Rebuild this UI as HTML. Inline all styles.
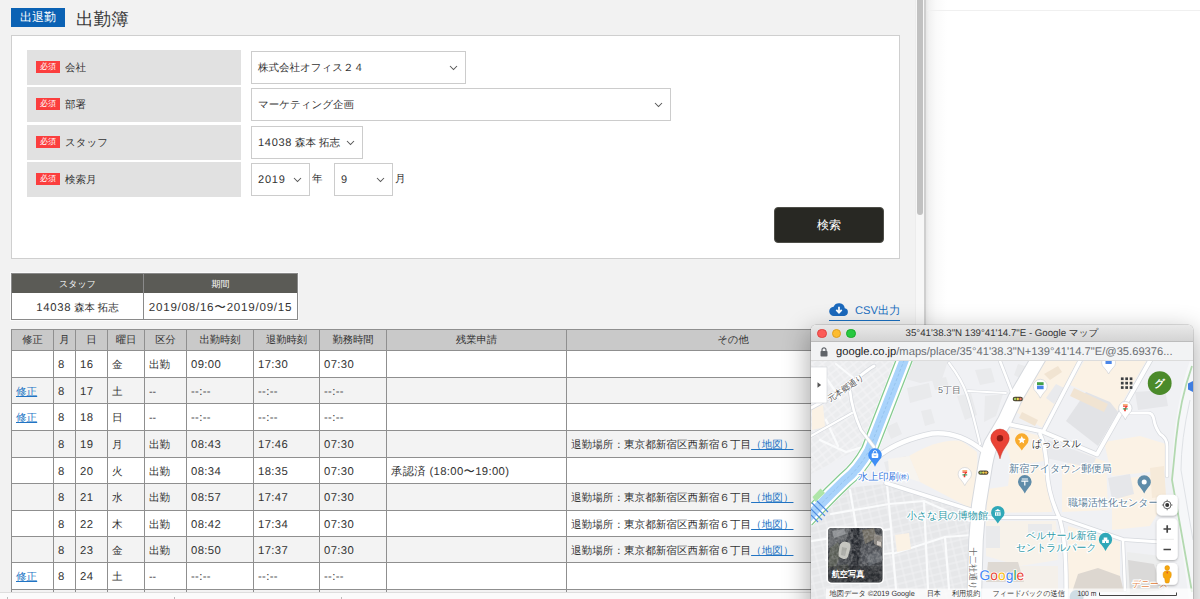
<!DOCTYPE html>
<html lang="ja">
<head>
<meta charset="utf-8">
<title>出勤簿</title>
<style>
*{box-sizing:border-box;margin:0;padding:0}
html,body{width:1200px;height:599px;overflow:hidden;background:#fff}
body{position:relative;font-family:"Liberation Sans",sans-serif;font-size:10.6px;color:#333;line-height:1;text-rendering:geometricPrecision}
.abs{position:absolute;white-space:nowrap;overflow:hidden}
/* main browser window */
#main{position:absolute;left:0;top:0;width:925px;height:599px;background:#f2f2f2;overflow:hidden}
#rightbg{position:absolute;left:925px;top:0;width:275px;height:599px;background:#fff}
#rightbg .sh{position:absolute;left:0;top:0;width:22px;height:599px;background:linear-gradient(to right,#e3e3e3 0,#f1f1f1 18%,#fafafa 50%,#fff 100%)}
#rightbg .ln{position:absolute;left:2px;top:10px;width:273px;height:1px;background:#f0f0f0}
#sbtrack{position:absolute;left:915px;top:0;width:10px;height:599px;background:#f7f7f7;border-left:1px solid #ececec}
#sbthumb{position:absolute;left:917px;top:0;width:6px;height:215px;background:#c1c1c1;border-radius:0 0 3px 3px}
#edge{position:absolute;left:924px;top:0;width:2px;height:599px;background:#cfcfcf}
.badge{left:11px;top:8px;width:54px;height:19px;background:#0b62b4;color:#fff;font-size:12px;line-height:19px;text-align:center}
.title{left:76px;top:6px;height:26px;width:200px;font-size:17.6px;line-height:26px;color:#3a3a3a}
#panel{position:absolute;left:11px;top:35px;width:889px;height:224px;background:#fff;border:1px solid #cfcfcf}
.lab{left:26.500px;width:214px;height:35px;background:#e1e1e1}
.req{position:absolute;left:9.500px;top:11px;width:24px;height:12px;background:#fb3e3e;color:#fff;font-size:8px;line-height:12px;text-align:center}
.lab span.t{position:absolute;left:38.500px;top:0;line-height:36.500px;font-size:10.5px;color:#333}
.sel{background:#fff;border:1px solid #ccc;height:32.500px;line-height:32.500px;padding-left:6px;color:#333;font-size:10.5px}
.n{letter-spacing:.7px}
.sel svg{position:absolute;right:7px;top:13px}
.btn{left:774px;top:207px;width:110px;height:36px;background:#282823;border:1px solid #4e4e48;border-radius:4px;color:#fff;font-size:12px;line-height:34px;text-align:center}
/* summary table */
.sum{position:absolute;left:11px;top:273px;width:287px;height:47px;border:1px solid #8a8a8a;background:#fff;box-shadow:0 0 0 1px #fafafa}
.sum .h{position:absolute;top:0;height:19px;background:#5b5b56;color:#fff;font-size:9px;line-height:21.500px;text-align:center}
.sum .d{position:absolute;top:19px;height:26px;line-height:30.500px;text-align:center;font-size:10.4px;color:#333;white-space:nowrap;overflow:hidden}
/* main table */
#tbl{position:absolute;left:11px;top:329px;width:905px;height:280px;border-left:1px solid #8f8f8f;border-top:1px solid #8f8f8f;background:#fff}
.tr{position:absolute;left:0;width:904px;border-bottom:1px solid #8f8f8f;overflow:hidden}
.tr.hd{top:0;height:21px;background:#c9c9c9}

.tr.alt{background:#f3f3f3}
.td{position:absolute;top:0;height:100%;border-right:1px solid #8f8f8f;line-height:28px;padding-left:4px;white-space:nowrap;overflow:hidden;font-size:10.6px;color:#333}
.hd .td{line-height:22px;text-align:center;padding-left:0;font-size:10.3px}
.td.num{font-size:11.3px;letter-spacing:.35px}
a{color:#2174c4;text-decoration:underline}
.csv{left:829px;top:301px;width:71px;height:19.5px;border-bottom:1px solid #1a6fc0;color:#1a6fc0;font-size:11.2px;line-height:20px;overflow:visible}
.csv svg{position:absolute;left:0;top:.5px}
.csv span{position:absolute;left:26px;top:0}
/*POPCSS*/
#pop{position:absolute;left:811px;top:325px;width:382px;height:290px;background:#fff;border-radius:5px 5px 0 0;box-shadow:0 9px 26px 3px rgba(0,0,0,.3),0 0 0 .5px rgba(0,0,0,.22);overflow:visible}
#pop .tb{position:absolute;left:0;top:0;width:382px;height:17px;background:linear-gradient(#e9e9e9,#d4d4d4);border-radius:5px 5px 0 0;border-bottom:1px solid #bcbcbc}
#pop .tb i{position:absolute;top:3.500px;width:9.5px;height:9.5px;border-radius:50%;border:.5px solid}
#pop .tt{position:absolute;left:60px;top:0;width:262px;height:17px;line-height:18px;text-align:center;font-size:9.7px;color:#333;white-space:nowrap;overflow:hidden}
#pop .ub{position:absolute;left:0;top:17px;width:382px;height:19px;background:#f2f3f4;border-bottom:1px solid #dcdcdc}
#pop .lock{position:absolute;left:9.200px;top:4.500px}
#pop .url{position:absolute;left:25px;top:0;height:19px;line-height:21px;font-size:11.18px;color:#6a6e73;white-space:nowrap;overflow:hidden;width:350px}
#pop .url b{font-weight:normal;color:#222}
#map{position:absolute;left:0;top:36px;width:382px;height:238px;overflow:hidden;background:#eff1f4}
#map svg{position:absolute;left:0;top:0}
.ml{font-family:"Liberation Sans",sans-serif}
/*ENDPOPCSS*/
</style>
</head>
<body>
<div id="main">
  <div class="abs badge">出退勤</div>
  <div class="abs title">出勤簿</div>
  <div id="panel"></div>

  <div class="abs lab" style="top:50px"><span class="req">必須</span><span class="t">会社</span></div>
  <div class="abs lab" style="top:87px"><span class="req">必須</span><span class="t">部署</span></div>
  <div class="abs lab" style="top:125px"><span class="req">必須</span><span class="t">スタッフ</span></div>
  <div class="abs lab" style="top:162px"><span class="req">必須</span><span class="t">検索月</span></div>

  <div class="abs sel" style="left:251px;top:51px;width:214.5px">株式会社オフィス２４<svg width="9" height="6" viewBox="0 0 9 6"><path d="M1 1l3.5 3.5L8 1" fill="none" stroke="#555" stroke-width="1.05"/></svg></div>
  <div class="abs sel" style="left:251px;top:88px;width:420px">マーケティング企画<svg width="9" height="6" viewBox="0 0 9 6"><path d="M1 1l3.5 3.5L8 1" fill="none" stroke="#555" stroke-width="1.05"/></svg></div>
  <div class="abs sel" style="left:251px;top:126px;width:111.5px;font-size:10.5px"><span class="n" style="font-size:11px">14038</span> 森本 拓志<svg width="9" height="6" viewBox="0 0 9 6"><path d="M1 1l3.5 3.5L8 1" fill="none" stroke="#555" stroke-width="1.05"/></svg></div>
  <div class="abs sel" style="left:251px;top:163px;width:58.5px;font-size:11px;letter-spacing:.8px">2019<svg width="9" height="6" viewBox="0 0 9 6"><path d="M1 1l3.5 3.5L8 1" fill="none" stroke="#555" stroke-width="1.05"/></svg></div>
  <div class="abs" style="left:312px;top:163px;height:32px;line-height:33.500px;width:14px">年</div>
  <div class="abs sel" style="left:334px;top:163px;width:58.5px;font-size:11px">9<svg width="9" height="6" viewBox="0 0 9 6"><path d="M1 1l3.5 3.5L8 1" fill="none" stroke="#555" stroke-width="1.05"/></svg></div>
  <div class="abs" style="left:395px;top:163px;height:32px;line-height:33.500px;width:14px">月</div>

  <div class="abs btn">検索</div>

  <div class="sum">
    <div class="h" style="left:0;width:132px;border-right:1px solid #8a8a8a">スタッフ</div>
    <div class="h" style="left:132px;width:153px">期間</div>
    <div class="d" style="left:0;width:132px;border-right:1px solid #8a8a8a"><span class="n" style="font-size:11.3px">14038</span> 森本 拓志</div>
    <div class="d" style="left:132px;width:153px;font-size:11.6px;letter-spacing:.75px">2019/08/16〜2019/09/15</div>
  </div>

  <div class="abs csv"><svg width="20" height="16" viewBox="0 0 20 16"><path d="M15.8 6.2A5.9 5.9 0 0 0 4.600 4.700A4.600 4.600 0 0 0 5 13.900h10.300a3.900 3.900 0 0 0 .5-7.700z" fill="#1b69bd"/><path d="M10 4.800v5.400M7.300 7.800L10 10.700L12.700 7.800" fill="none" stroke="#fff" stroke-width="1.700"/></svg><span>CSV出力</span></div>

  <div id="tbl">
    <div class="tr hd"><div class="td" style="left:0.0px;width:42.0px">修正</div><div class="td" style="left:42.0px;width:22.0px">月</div><div class="td" style="left:64.0px;width:32.0px">日</div><div class="td" style="left:96.0px;width:37.0px">曜日</div><div class="td" style="left:133.0px;width:42.0px">区分</div><div class="td" style="left:175.0px;width:67.0px">出勤時刻</div><div class="td" style="left:242.0px;width:66.0px">退勤時刻</div><div class="td" style="left:308.0px;width:67.0px">勤務時間</div><div class="td" style="left:375.0px;width:180.0px">残業申請</div><div class="td" style="left:555.0px;width:333.0px">その他</div></div>
    <div class="tr r" style="top:21px;height:27px"><div class="td" style="left:0.0px;width:42.0px"></div><div class="td num" style="left:42.0px;width:22.0px">8</div><div class="td num" style="left:64.0px;width:32.0px">16</div><div class="td" style="left:96.0px;width:37.0px">金</div><div class="td" style="left:133.0px;width:42.0px">出勤</div><div class="td num" style="left:175.0px;width:67.0px">09:00</div><div class="td num" style="left:242.0px;width:66.0px">17:30</div><div class="td num" style="left:308.0px;width:67.0px">07:30</div><div class="td" style="left:375.0px;width:180.0px"></div><div class="td" style="left:555.0px;width:333.0px"></div></div>
    <div class="tr r alt" style="top:48px;height:26px"><div class="td" style="left:0.0px;width:42.0px"><a>修正</a></div><div class="td num" style="left:42.0px;width:22.0px">8</div><div class="td num" style="left:64.0px;width:32.0px">17</div><div class="td" style="left:96.0px;width:37.0px">土</div><div class="td" style="left:133.0px;width:42.0px">--</div><div class="td num" style="left:175.0px;width:67.0px">--:--</div><div class="td num" style="left:242.0px;width:66.0px">--:--</div><div class="td num" style="left:308.0px;width:67.0px">--:--</div><div class="td" style="left:375.0px;width:180.0px"></div><div class="td" style="left:555.0px;width:333.0px"></div></div>
    <div class="tr r" style="top:74px;height:27px"><div class="td" style="left:0.0px;width:42.0px"><a>修正</a></div><div class="td num" style="left:42.0px;width:22.0px">8</div><div class="td num" style="left:64.0px;width:32.0px">18</div><div class="td" style="left:96.0px;width:37.0px">日</div><div class="td" style="left:133.0px;width:42.0px">--</div><div class="td num" style="left:175.0px;width:67.0px">--:--</div><div class="td num" style="left:242.0px;width:66.0px">--:--</div><div class="td num" style="left:308.0px;width:67.0px">--:--</div><div class="td" style="left:375.0px;width:180.0px"></div><div class="td" style="left:555.0px;width:333.0px"></div></div>
    <div class="tr r alt" style="top:101px;height:27px"><div class="td" style="left:0.0px;width:42.0px"></div><div class="td num" style="left:42.0px;width:22.0px">8</div><div class="td num" style="left:64.0px;width:32.0px">19</div><div class="td" style="left:96.0px;width:37.0px">月</div><div class="td" style="left:133.0px;width:42.0px">出勤</div><div class="td num" style="left:175.0px;width:67.0px">08:43</div><div class="td num" style="left:242.0px;width:66.0px">17:46</div><div class="td num" style="left:308.0px;width:67.0px">07:30</div><div class="td" style="left:375.0px;width:180.0px"></div><div class="td" style="left:555.0px;width:333.0px">退勤場所：東京都新宿区西新宿６丁目<a>（地図）</a></div></div>
    <div class="tr r" style="top:128px;height:26px"><div class="td" style="left:0.0px;width:42.0px"></div><div class="td num" style="left:42.0px;width:22.0px">8</div><div class="td num" style="left:64.0px;width:32.0px">20</div><div class="td" style="left:96.0px;width:37.0px">火</div><div class="td" style="left:133.0px;width:42.0px">出勤</div><div class="td num" style="left:175.0px;width:67.0px">08:34</div><div class="td num" style="left:242.0px;width:66.0px">18:35</div><div class="td num" style="left:308.0px;width:67.0px">07:30</div><div class="td num" style="left:375.0px;width:180.0px">承認済 (18:00〜19:00)</div><div class="td" style="left:555.0px;width:333.0px"></div></div>
    <div class="tr r alt" style="top:154px;height:27px"><div class="td" style="left:0.0px;width:42.0px"></div><div class="td num" style="left:42.0px;width:22.0px">8</div><div class="td num" style="left:64.0px;width:32.0px">21</div><div class="td" style="left:96.0px;width:37.0px">水</div><div class="td" style="left:133.0px;width:42.0px">出勤</div><div class="td num" style="left:175.0px;width:67.0px">08:57</div><div class="td num" style="left:242.0px;width:66.0px">17:47</div><div class="td num" style="left:308.0px;width:67.0px">07:30</div><div class="td" style="left:375.0px;width:180.0px"></div><div class="td" style="left:555.0px;width:333.0px">退勤場所：東京都新宿区西新宿６丁目<a>（地図）</a></div></div>
    <div class="tr r" style="top:181px;height:26px"><div class="td" style="left:0.0px;width:42.0px"></div><div class="td num" style="left:42.0px;width:22.0px">8</div><div class="td num" style="left:64.0px;width:32.0px">22</div><div class="td" style="left:96.0px;width:37.0px">木</div><div class="td" style="left:133.0px;width:42.0px">出勤</div><div class="td num" style="left:175.0px;width:67.0px">08:42</div><div class="td num" style="left:242.0px;width:66.0px">17:34</div><div class="td num" style="left:308.0px;width:67.0px">07:30</div><div class="td" style="left:375.0px;width:180.0px"></div><div class="td" style="left:555.0px;width:333.0px">退勤場所：東京都新宿区西新宿６丁目<a>（地図）</a></div></div>
    <div class="tr r alt" style="top:207px;height:26px"><div class="td" style="left:0.0px;width:42.0px"></div><div class="td num" style="left:42.0px;width:22.0px">8</div><div class="td num" style="left:64.0px;width:32.0px">23</div><div class="td" style="left:96.0px;width:37.0px">金</div><div class="td" style="left:133.0px;width:42.0px">出勤</div><div class="td num" style="left:175.0px;width:67.0px">08:50</div><div class="td num" style="left:242.0px;width:66.0px">17:37</div><div class="td num" style="left:308.0px;width:67.0px">07:30</div><div class="td" style="left:375.0px;width:180.0px"></div><div class="td" style="left:555.0px;width:333.0px">退勤場所：東京都新宿区西新宿６丁目<a>（地図）</a></div></div>
    <div class="tr r" style="top:233px;height:27px"><div class="td" style="left:0.0px;width:42.0px"><a>修正</a></div><div class="td num" style="left:42.0px;width:22.0px">8</div><div class="td num" style="left:64.0px;width:32.0px">24</div><div class="td" style="left:96.0px;width:37.0px">土</div><div class="td" style="left:133.0px;width:42.0px">--</div><div class="td num" style="left:175.0px;width:67.0px">--:--</div><div class="td num" style="left:242.0px;width:66.0px">--:--</div><div class="td num" style="left:308.0px;width:67.0px">--:--</div><div class="td" style="left:375.0px;width:180.0px"></div><div class="td" style="left:555.0px;width:333.0px"></div></div>
    <div class="tr r alt" style="top:260px;height:27px"><div class="td" style="left:0.0px;width:42.0px"></div><div class="td num" style="left:42.0px;width:22.0px"></div><div class="td num" style="left:64.0px;width:32.0px"></div><div class="td" style="left:96.0px;width:37.0px"></div><div class="td" style="left:133.0px;width:42.0px"></div><div class="td num" style="left:175.0px;width:67.0px"></div><div class="td num" style="left:242.0px;width:66.0px"></div><div class="td num" style="left:308.0px;width:67.0px"></div><div class="td" style="left:375.0px;width:180.0px"></div><div class="td" style="left:555.0px;width:333.0px"></div></div>
  </div>
  <div id="sbtrack"></div>
  <div id="sbthumb"></div>
  <div class="abs" style="left:0;top:591.500px;width:925px;height:8px;background:#fbfbfb;border-top:1px solid #dedede"></div>
  <div class="abs" style="left:7px;top:597px;width:1px;height:2px;background:#bbb"></div><div class="abs" style="left:174px;top:597px;width:1px;height:2px;background:#bbb"></div><div class="abs" style="left:341px;top:597px;width:1px;height:2px;background:#bbb"></div>
</div>
<div id="rightbg"><div class="sh"></div><div class="ln"></div></div>
<div id="edge"></div>
<!--POP-->
<div id="pop">
  <div class="tb">
    <i style="left:6px;background:#fc5b57;border-color:#df4240"></i><i style="left:20.600px;background:#fdbc2e;border-color:#de9f22"></i><i style="left:35.200px;background:#27c840;border-color:#1aab29"></i>
    <div class="tt">35°41'38.3"N 139°41'14.7"E - Google マップ</div>
  </div>
  <div class="ub">
    <svg class="lock" width="8" height="10" viewBox="0 0 8 10"><rect x="0.5" y="4" width="7" height="5.5" rx="0.8" fill="#5f6368"/><path d="M2 4.2V2.8a2 2 0 0 1 4 0v1.4" fill="none" stroke="#5f6368" stroke-width="1.2"/></svg>
    <div class="url"><b>google.co.jp</b>/maps/place/35°41'38.3"N+139°41'14.7"E/@35.69376...</div>
  </div>
  <div id="map">
<svg width="382" height="238" viewBox="811 361 382 238">
<defs>
<pattern id="dense" width="9" height="7" patternUnits="userSpaceOnUse" patternTransform="rotate(-14)"><rect width="9" height="7" fill="#f1f1f3"/><rect x="0.5" y="0.5" width="8" height="6" fill="#e6e7e9"/></pattern>
<pattern id="dense2" width="8" height="6.5" patternUnits="userSpaceOnUse" patternTransform="rotate(-38)"><rect width="8" height="6.5" fill="#f4f4f6"/><rect x="0.6" y="0.6" width="6.800" height="5.300" fill="#ebecee"/></pattern>
<filter id="cs" x="-30%" y="-30%" width="160%" height="160%"><feDropShadow dx="0" dy="1" stdDeviation="1.2" flood-color="#000" flood-opacity=".3"/></filter>
<filter id="nz" x="0" y="0" width="100%" height="100%"><feTurbulence type="fractalNoise" baseFrequency=".35" numOctaves="2" seed="7" result="t"/><feColorMatrix type="matrix" values="0 0 0 0 .5  0 0 0 0 .5  0 0 0 0 .5  .9 .9 .9 0 -1.05"/></filter>
</defs>
<rect x="811" y="361" width="382" height="238" fill="#f0f1f4"/>
<!-- dense building areas -->
<path d="M811 361H898L868 444L811 474Z" fill="url(#dense2)"/>
<path d="M811 520L846 488L884 484L972 512L972 599H811Z" fill="url(#dense)"/>
<!-- large gray footprints right of river -->
<g fill="#e9eaec">
<path d="M908 361h40l-6 18l-22 4l-14 -4z"/><path d="M907 388l22 -5l3 14l-22 6z"/><path d="M886 427l11 -5l5 12l-11 5z"/><path d="M921 411l10 -2l4 14l-10 3z"/>
<path d="M932 380l14 -3l3 10l-14 3z"/><path d="M957 396l14 -3l6 22l-12 5z"/><path d="M975 370l16 -2l4 14l-15 3z"/>
<path d="M985 396l18 -2l-7 22l-12 6z"/><path d="M1018 364l14 4l-7 13l-11 -6z"/>
<path d="M884 462l22 -6l4 14l-22 8z"/>
</g>
<!-- beige commercial areas -->
<g fill="#fbf2e5">
<path d="M812 409l11 -4l2 22l-13 3z"/>
<path d="M909 456Q940 438 962 441L977 452L978 480L970 508L920 482Z"/>
<path d="M1016.700 412.500L1041.700 361L1078 361L1042 427.500Z"/>
<path d="M1084 361H1146L1112 420L1094 412L1100 398L1070 385Z"/>
<path d="M1003 446L1011 428L1040 436L1044 461L1012 466L1008 452Z"/>
<path d="M1010 470L1046 466L1052 512L986 513L988 489L1008 486Z"/>
<path d="M1062 470L1080 452L1106 462L1108 510L1062 512Z"/>
<path d="M1104 442L1140 436L1166 444L1168 470L1112 476Z"/>
<path d="M1112 480L1160 474L1166 500L1150 526L1112 530Z"/>
<path d="M1068 526L1120 542L1120 588L1068 592Z"/>
<path d="M986 521H1056L1058 560L1020 566L986 556Z" fill="#f7f2ea"/>
<path d="M1020 566h38v33h-38z" fill="#f4f0ea"/>
</g>
<path d="M888 459L909 456L920 482L889 472Z" fill="#f7f4ef"/>
<!-- gray buildings on right -->
<g fill="#e2e3e6">
<path d="M1066 421L1086 392L1110 402L1118 412L1098 446Z"/>
<path d="M1135 392l30 -2l3 16l-30 4z" fill="#e6e7ea"/>
<path d="M1046 398l10 -14l8 4l-10 16z" fill="#e9eaed"/>
<path d="M1048 440l48 18l-4 10l-46 -10z" fill="#e8e9ec"/>
<path d="M1108 478l22 -4l4 20l-22 6z" fill="#e6e7ea"/>
<path d="M1127 552l34 4l4 43h-40z" fill="#eceded"/>
<path d="M1128 560l26 4l8 26l-32 4z" fill="#dad9d8"/>
<path d="M988 562l30 0l6 20l-38 0z" fill="#ded9d3"/>
<path d="M986 526l14 0l0 22l-14 0z" fill="#e9eaec"/>
<path d="M1028 524h24v12h-24z" fill="#e9eaec"/>
</g>
<g fill="#f1e4d2">
<path d="M1022 412l16 8l-3 6l-16 -8z"/><path d="M1044 374l14 -8l4 6l-12 8z"/>
<path d="M1074 388l34 16l-4 8l-34 -16z"/><path d="M1150 468l14 -2l2 30l-14 2z" fill="#f6ead9"/>
</g>
<g fill="none" stroke="#fafbfc" stroke-width="2.200" stroke-linecap="round">
<path d="M887 484.300L891 526.800L893 553.700L896 589"/><path d="M831 514L889 504L924 501"/><path d="M812 541L891 529"/><path d="M924 502L928 589"/><path d="M945 537L949 589"/><path d="M893 553.700L945 537L972 535"/><path d="M826 560L893 553"/><path d="M850 490L856 526"/><path d="M924 501L972 522"/>
<path d="M822 372L840 398"/><path d="M836 364L856 380"/><path d="M820 440L846 452L866 446"/><path d="M826 420L838 446"/>
</g>
<path d="M895 535l14 -2l2 16l-14 3z" fill="#fbf2e5"/>
<path d="M1072 592l6 -18l20 -6l22 8l4 16z" fill="#ddd7d0"/>
<path d="M1193 361v238h-4L1172 480Q1172 440 1178 408T1190 361z" fill="#f6f7f9"/>
<!-- river -->
<path d="M906.200 355L888.300 401L869 450.500Q858 470 845 480Q826 498 806 520" fill="none" stroke="#fff" stroke-width="17.600"/>
<path d="M906.200 355L888.300 401L869 450.500Q858 470 845 480Q826 498 806 520" fill="none" stroke="#86cb90" stroke-width="16.600"/>
<path d="M906.200 355L888.300 401L869 450.500Q858 470 845 480Q826 498 806 520" fill="none" stroke="#fff" stroke-width="14"/>
<path d="M906.200 355L888.300 401L869 450.500Q858 470 845 480Q826 498 806 520" fill="none" stroke="#a9d3fb" stroke-width="9.300"/>
<path d="M906.200 355L888.300 401L869 450.500Q858 470 845 480Q826 498 806 520" fill="none" stroke="#8dbbe8" stroke-width=".7" stroke-dasharray="3 2"/>
<path d="M812 503l13 13M811 509l11 11M816 500l12 12M811 515l7 7" stroke="#4f8de0" stroke-width="1.200"/>
<path d="M812.500 497l8 -8.500l4.500 4.500l-9.500 9z" fill="#aee5a8"/>
<!-- minor roads: casing -->
<g fill="none" stroke="#d6d9de" stroke-linecap="round" stroke-linejoin="round">
<path d="M811 408Q840 392 855 380T874 366" stroke-width="4.5"/>
<path d="M850 391Q852 410 861 430L874 447" stroke-width="4"/>
<path d="M811 436L852 413" stroke-width="3.5"/>
<path d="M880 455Q900 440 932 433.500Q958 431 982 450" stroke-width="6"/>
<path d="M949 363Q962 380 967 395T980 444" stroke-width="3.5"/>
<path d="M1000 361L1012 392" stroke-width="4"/>
<path d="M968 391L1006 393" stroke-width="3"/>
<path d="M886 483L974 511" stroke-width="5"/>
<path d="M1008 424L1042 431.500L1097 454.500L1151 359" stroke-width="5.500"/>
<path d="M1044 430L1081 359" stroke-width="5"/>
<path d="M1130 413H1148Q1153 413 1154 420T1160 434Q1167 438 1167 446V476" stroke-width="4.200"/>
<path d="M985 517.500H1059L1123 539.500L1160 542" stroke-width="4.600"/>
<path d="M1040 434Q1046 446 1047 470T1059 517Q1067 540 1066 599" stroke-width="5"/>
<path d="M1123 540L1125 590" stroke-width="4"/>
</g>
<path d="M1041 354L1015 398.500L1004.600 421L991 444Q986.500 455 984.200 471.700L978.800 505L976 540L974 604" fill="none" stroke="#d6d9de" stroke-width="15.5" stroke-linejoin="round"/>
<!-- roads fill -->
<g fill="none" stroke="#fff" stroke-linecap="round" stroke-linejoin="round">
<path d="M811 408Q840 392 855 380T874 366" stroke-width="3"/>
<path d="M850 391Q852 410 861 430L874 447" stroke-width="2.6"/>
<path d="M811 436L852 413" stroke-width="2.2"/>
<path d="M880 455Q900 440 932 433.500Q958 431 982 450" stroke-width="4.4"/>
<path d="M949 363Q962 380 967 395T980 444" stroke-width="2.2"/>
<path d="M1000 361L1012 392" stroke-width="2.6"/>
<path d="M968 391L1006 393" stroke-width="1.8"/>
<path d="M886 483L974 511" stroke-width="3.6"/>
<path d="M1008 424L1042 431.500L1097 454.500L1151 359" stroke-width="4"/>
<path d="M1044 430L1081 359" stroke-width="3.600"/>
<path d="M1130 413H1148Q1153 413 1154 420T1160 434Q1167 438 1167 446V476" stroke-width="2.800"/>
<path d="M985 517.500H1059L1123 539.500L1160 542" stroke-width="3.200"/>
<path d="M1040 434Q1046 446 1047 470T1059 517Q1067 540 1066 599" stroke-width="3.600"/>
<path d="M1123 540L1125 590" stroke-width="2.600"/>
</g>
<path d="M1041 354L1015 398.500L1004.600 421L991 444Q986.500 455 984.200 471.700L978.800 505L976 540L974 604" fill="none" stroke="#fff" stroke-width="13.5" stroke-linejoin="round"/>
<!-- green line right -->
<path d="M1192 366Q1180 400 1176 440T1172 480L1192 592" fill="none" stroke="#b3d9b0" stroke-width="1.800"/><path d="M1190 400Q1181 440 1181 470L1193 540" fill="none" stroke="#dfe2e6" stroke-width="1"/>

<g class="ml" font-family="Liberation Sans, sans-serif" font-size="10.3" stroke-linejoin="round">
<g paint-order="stroke" stroke="#fff" stroke-width="2.2">
<text x="0" y="0" transform="translate(830 402) rotate(-34)" font-size="8.400" fill="#555" stroke-width="1.800" textLength="41.500" lengthAdjust="spacingAndGlyphs">元本郷通り</text>
<text x="938" y="393" font-size="8.800" fill="#6a6e73" stroke-width="1.500" textLength="23" lengthAdjust="spacingAndGlyphs">5丁目</text>
<text x="858" y="480" fill="#3f7de0" font-size="10.200" textLength="51" lengthAdjust="spacingAndGlyphs">水上印刷㈱</text>
<text x="1032" y="446.500" fill="#333" font-size="10" textLength="49" lengthAdjust="spacingAndGlyphs">ぱっとスル</text>
<text x="1009" y="472" fill="#5e7f99" textLength="102.600" lengthAdjust="spacingAndGlyphs">新宿アイタウン郵便局</text>
<text x="1068" y="505.500" fill="#5e7f99" font-size="10.100" textLength="90.500" lengthAdjust="spacingAndGlyphs">職場活性化センター</text>
<text x="906.700" y="518.800" fill="#2b98a6" font-size="10.200" textLength="81.300" lengthAdjust="spacingAndGlyphs">小さな貝の博物館</text>
<text x="1026" y="539" fill="#2b98a6" font-size="10.100" textLength="70.500" lengthAdjust="spacingAndGlyphs">ベルサール新宿</text>
<text x="1016" y="551" fill="#2b98a6" font-size="10.100" textLength="80.500" lengthAdjust="spacingAndGlyphs">セントラルパーク</text>
<text x="1132" y="587" fill="#e58a4e" font-size="9.500" textLength="36" lengthAdjust="spacingAndGlyphs">デニーズ</text>
<text x="0" y="0" transform="translate(969.800 547.500) rotate(90)" font-size="8.600" fill="#6a6a6a" stroke-width="1.200" textLength="42" lengthAdjust="spacingAndGlyphs">十二社通り</text>
</g>
<!-- poi pins -->
<g id="pins">
<path d="M870.81 460.36A6.80 6.80 0 1 1 879.19 460.36Q876.20 464.03 875.00 466.70Q873.80 464.03 870.81 460.36z" fill="#3f8ef5"/>
<rect x="871.700" y="453.200" width="6.600" height="4.800" rx=".9" fill="#fff"/><path d="M873.300 453.400v-1.100a1.700 1.700 0 0 1 3.400 0v1.100" fill="none" stroke="#fff" stroke-width=".9"/><path d="M873.600 455.300q1.400 1.300 2.800 0" fill="none" stroke="#3f8ef5" stroke-width=".7"/>
<path d="M1017.68 445.28A6.70 6.70 0 1 1 1025.92 445.28Q1023.00 448.44 1021.80 450.60Q1020.60 448.44 1017.68 445.28z" fill="#f9ab2d"/>
<path d="M1021.800 436.100l1.150 2.500l2.700.3l-2 1.850l.55 2.700l-2.400-1.400l-2.400 1.400l.55-2.700l-2-1.850l2.700-.3z" fill="#fff"/>
<path d="M1020.61 487.16A6.80 6.80 0 1 1 1028.99 487.16Q1026.00 490.88 1024.80 493.60Q1023.60 490.88 1020.61 487.16z" fill="#5f8ca9"/>
<path d="M1021.700 479h6.200M1021.300 481.100h7M1024.800 481.100v4.300" stroke="#fff" stroke-width="1.200" fill="none"/>
<path d="M1140.08 487.28A6.70 6.70 0 1 1 1148.32 487.28Q1145.40 490.94 1144.20 493.60Q1143.00 490.94 1140.08 487.28z" fill="#5f8ca9"/>
<circle cx="1144.200" cy="482" r="2.500" fill="#fff"/>
<path d="M993.68 517.88A6.70 6.70 0 1 1 1001.92 517.88Q999.00 521.24 997.80 523.60Q996.60 521.24 993.68 517.88z" fill="#2fa8b8"/>
<path d="M994.400 511.300l3.400-2.300l3.400 2.300zM995 512.200h5.600v3.600h-5.600z" fill="#fff"/><path d="M996.700 512.600v2.800M998.900 512.600v2.800" stroke="#2fa8b8" stroke-width=".8"/>
<path d="M1101.38 544.78A6.70 6.70 0 1 1 1109.62 544.78Q1106.70 548.39 1105.50 551.00Q1104.30 548.39 1101.38 544.78z" fill="#2fa8b8"/>
<path d="M1102.200 543h6.600v-3.200h-1.500v-2.400h-3.600v2.400h-1.500z" fill="#fff"/><path d="M1105.500 543v-1.800" stroke="#2fa8b8" stroke-width="1"/>
<circle cx="1076.600" cy="597" r="7" fill="#5f8ca9"/>
<path d="M960.68 479.48A6.70 6.70 0 1 1 968.92 479.48Q966.00 483.04 964.80 485.60Q963.60 483.04 960.68 479.48z" fill="#fff" stroke="#c9ccd1" stroke-width=".6"/>
<path d="M1121.18 413.48A6.70 6.70 0 1 1 1129.42 413.48Q1126.50 417.14 1125.30 419.80Q1124.10 417.14 1121.18 413.48z" fill="#fff" stroke="#c9ccd1" stroke-width=".6"/>
<path d="M1035.99 391.82A7.00 7.00 0 1 1 1044.61 391.82Q1041.50 395.51 1040.30 398.20Q1039.10 395.51 1035.99 391.82z" fill="#fff" stroke="#c9ccd1" stroke-width=".6"/>
<path d="M1104.29 368.02A7.00 7.00 0 1 1 1112.91 368.02Q1109.80 371.51 1108.60 374.00Q1107.40 371.51 1104.29 368.02z" fill="#fff" stroke="#c9ccd1" stroke-width=".6"/>
<path d="M962.5 471.4h4.600v1.400l-1.800 1.400v3h-1.600v-2.400l1.500-2h-2.700z" fill="#ee3b2f"/><rect x="962.4" y="474.4" width="4.800" height="1" fill="#1f9a55"/><rect x="962.4" y="470.4" width="4.800" height=".8" fill="#f58220"/>
<path d="M1123.0 405.4h4.600v1.400l-1.800 1.400v3h-1.600v-2.400l1.500-2h-2.700z" fill="#ee3b2f"/><rect x="1122.9" y="408.4" width="4.800" height="1" fill="#1f9a55"/><rect x="1122.9" y="404.4" width="4.800" height=".8" fill="#f58220"/>
<rect x="1037" y="382.200" width="6.600" height="2.800" fill="#43a047"/><rect x="1037" y="385.600" width="6.600" height="3.600" fill="#4a86e8"/>
<rect x="1105.500" y="361" width="6.200" height="3" fill="#4a86e8"/>
<g><rect x="978.300" y="470.400" width="10.200" height="4.400" rx="2.200" fill="#4d4631"/><circle cx="980.700" cy="472.600" r="1.200" fill="#9ccc65"/><circle cx="983.400" cy="472.600" r="1.200" fill="#f0d84a"/><circle cx="986.100" cy="472.600" r="1.200" fill="#f0b44a"/></g>
<g><rect x="1012.700" y="396.800" width="10.200" height="4.400" rx="2.200" fill="#4d4631"/><circle cx="1015.100" cy="399" r="1.200" fill="#9ccc65"/><circle cx="1017.800" cy="399" r="1.200" fill="#f0d84a"/><circle cx="1020.500" cy="399" r="1.200" fill="#ee7b6a"/></g>
<path d="M1193 381l-5 2.500v6l5 2.500z" fill="#3f7de0"/>
</g>
<!-- red marker -->
<path d="M1000 429.100a9.200 9.200 0 0 1 9.200 9.200c0 6-6.700 9.500-9.200 20.500c-2.500-11-9.200-14.500-9.200-20.500a9.200 9.200 0 0 1 9.200-9.200z" fill="#ea4335" stroke="#c5352b" stroke-width=".5"/>
<circle cx="1000" cy="438.300" r="3.200" fill="#8e1b14"/>
<!-- Google logo -->
<g font-size="14" paint-order="stroke" stroke="#fff" stroke-width="1.600"><text x="979.600" y="580" textLength="44.700" lengthAdjust="spacingAndGlyphs"><tspan fill="#4285f4">G</tspan><tspan fill="#ea4335">o</tspan><tspan fill="#fbbc05">o</tspan><tspan fill="#4285f4">g</tspan><tspan fill="#34a853">l</tspan><tspan fill="#ea4335">e</tspan></text></g>
<!-- apps + avatar -->
<g fill="#3c4043"><rect x="1120.900" y="377.400" width="2.700" height="2.700"/><rect x="1125.300" y="377.400" width="2.700" height="2.700"/><rect x="1129.700" y="377.400" width="2.700" height="2.700"/><rect x="1120.900" y="381.800" width="2.700" height="2.700"/><rect x="1125.300" y="381.800" width="2.700" height="2.700"/><rect x="1129.700" y="381.800" width="2.700" height="2.700"/><rect x="1120.900" y="386.200" width="2.700" height="2.700"/><rect x="1125.300" y="386.200" width="2.700" height="2.700"/><rect x="1129.700" y="386.200" width="2.700" height="2.700"/></g>
<circle cx="1159.700" cy="383.200" r="11.900" fill="#4b8a2a"/>
<text x="1159.700" y="387" text-anchor="middle" font-size="10.500" fill="#fff" font-weight="bold">グ</text>
<!-- side toggle -->
<g><rect x="810" y="367" width="17" height="36" fill="#fff" stroke="#d0d3d8" stroke-width=".6"/><path d="M817.500 382.200l3.600 2.800l-3.600 2.800z" fill="#555"/></g>
<!-- satellite thumb -->
<g>
<rect x="826.400" y="526.400" width="57.600" height="57.600" rx="5" fill="#fff"/>
<clipPath id="sc"><rect x="828" y="528" width="54.500" height="54.500" rx="3.800"/></clipPath>
<g clip-path="url(#sc)">
<rect x="828" y="528" width="55" height="55" fill="#3f4247"/>
<path d="M828 528h22l-4 12l-18 8z" fill="#5d6064"/><path d="M832 531l12 -2l2 5l-12 4z" fill="#8d9094"/>
<path d="M830 548l8 -6l4 10l-6 14l-8 2z" fill="#565a52"/>
<path d="M839.500 546q1 -4 5 -4.500l4 1q2.500 1 2 5l-2.500 9q-1 3 -4.500 2.500l-3.500 -1.500q-2 -1.500 -1.500 -4z" fill="#c9c9c2"/>
<path d="M842 547l5 1l-2 8l-4 -1z" fill="#a9aaa4"/>
<path d="M851 528h8l2 20l-4 22l-6 12h-5l6 -22z" fill="#25282e"/>
<path d="M862 530l12 -2l3 10l-12 6z" fill="#6e6a60"/><path d="M874 534l8 2v12l-8 -4z" fill="#85807a"/><path d="M877 541l4 1v4l-4 -1z" fill="#d8d0c8"/>
<path d="M860 548l10 -4l8 6l-4 12l-12 2z" fill="#4c4f55"/><path d="M866 556l14 -6l3 10l-14 6z" fill="#60646a"/>
<path d="M834 566l14 -2l2 10l-16 4z" fill="#4a4d4a"/><path d="M856 566l20 4l6 10l-26 2z" fill="#33363b"/>
<rect x="828" y="528" width="55" height="55" filter="url(#nz)" opacity=".55"/>
<rect x="828" y="566" width="55" height="17" fill="#000" opacity=".18"/>
</g>
<text x="831.700" y="577.300" font-size="8.700" font-weight="bold" fill="#fff" textLength="32.700" lengthAdjust="spacingAndGlyphs" stroke="#222" stroke-width=".3" paint-order="stroke">航空写真</text>
</g>
<!-- controls -->
<g filter="url(#cs)">
<rect x="1156.700" y="494.700" width="21" height="20.700" rx="4.500" fill="#fff"/>
<rect x="1156.700" y="518.500" width="21" height="41.500" rx="4.500" fill="#fff"/>
<rect x="1156.700" y="563" width="21" height="21.700" rx="4.500" fill="#fff"/>
</g>
<circle cx="1167.200" cy="505" r="3.800" fill="none" stroke="#666" stroke-width="1"/><circle cx="1167.200" cy="505" r="2" fill="#333"/><path d="M1167.200 499.700v1.800M1167.200 508.500v1.800M1161.900 505h1.800M1170.700 505h1.800" stroke="#666" stroke-width=".9"/>
<path d="M1163.500 529h7.400M1167.200 525.300v7.400M1163.500 549.500h7.400" stroke="#444" stroke-width="1.700"/>
<path d="M1160.500 539.300h13.400" stroke="#e6e6e6" stroke-width=".8"/>
<g fill="#f7a70d" stroke="#dc8c00" stroke-width=".5"><path d="M1164.400 571.400q2.800-1.200 5.600 0q1.500.8 1.300 3.400l-.4 2.400q-.3 1-1.200.8l-.5 4q-.2 1-1 1h-2q-.8 0-1-1l-.5-4q-.9.200-1.200-.8l-.4-2.400q-.2-2.600 1.300-3.400z"/><circle cx="1167.200" cy="568" r="2.400"/></g><path d="M1167.200 571.200l.8 1.600l-.8 1l-.8-1z" fill="#e04a2f"/>
<!-- footer -->
<rect x="826" y="588.500" width="367" height="11" fill="#fff" opacity=".7"/>
<g font-size="7.600" fill="#333">
<text x="829.500" y="596.200" textLength="85.200" lengthAdjust="spacingAndGlyphs">地図データ ©2019 Google</text><text x="927" y="596.200" textLength="13.700" lengthAdjust="spacingAndGlyphs">日本</text><text x="952" y="596.200" textLength="28.200" lengthAdjust="spacingAndGlyphs">利用規約</text><text x="992.500" y="596.200" textLength="72.300" lengthAdjust="spacingAndGlyphs">フィードバックの送信</text><text x="1077.400" y="596.200" textLength="19" lengthAdjust="spacingAndGlyphs">100 m</text>
</g>
<path d="M1099.500 592.500v3h77v-3" fill="none" stroke="#444" stroke-width="1"/>
</g>

</svg>

  </div>
</div>
<!--ENDPOP-->
</body>
</html>
